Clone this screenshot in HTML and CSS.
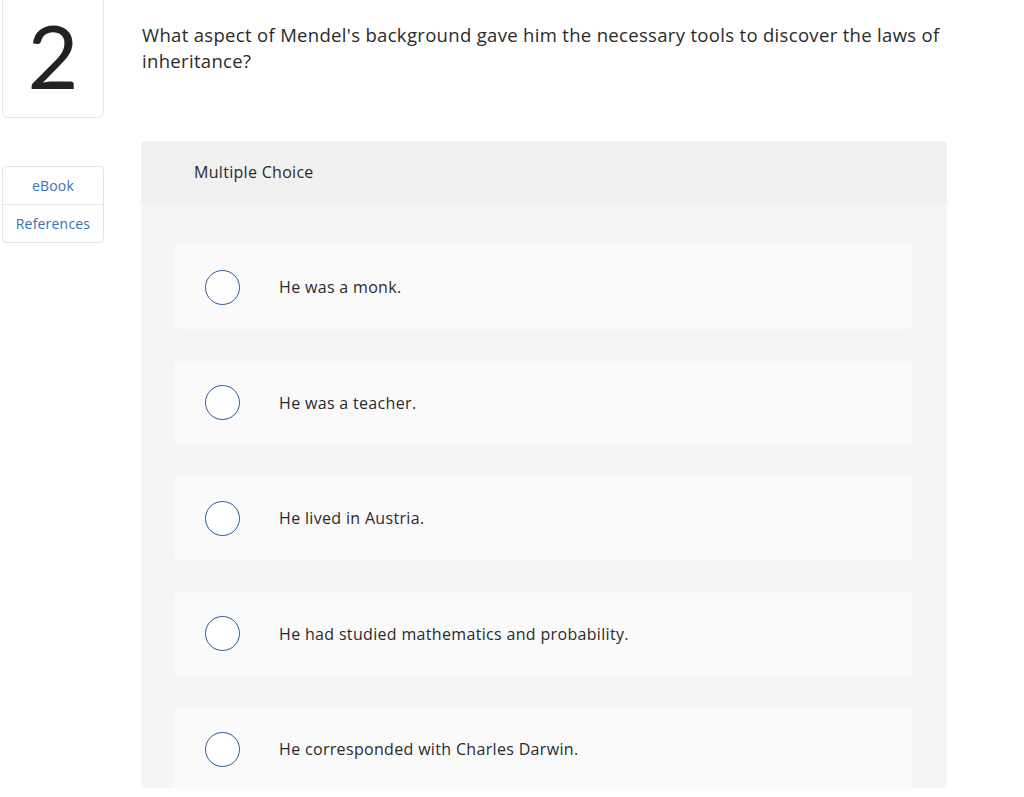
FILE: index.html
```html
<!DOCTYPE html>
<html lang="en">
<head>
<meta charset="utf-8">
<title>Question 2</title>
<link rel="stylesheet" href="styles.css">
</head>
<body>
<div class="page">
  <aside class="side">
    <div class="qnum">2</div>
    <nav class="tools">
      <a class="tool" href="#">eBook</a>
      <a class="tool" href="#">References</a>
    </nav>
  </aside>
  <main class="main">
    <p class="question">What aspect of Mendel's background gave him the necessary tools to discover the laws of inheritance?</p>
    <section class="panel">
      <div class="panel-head">Multiple Choice</div>
      <div class="panel-body">
        <label class="option"><span class="radio"></span><span class="opt-text">He was a monk.</span></label>
        <label class="option"><span class="radio"></span><span class="opt-text">He was a teacher.</span></label>
        <label class="option"><span class="radio"></span><span class="opt-text">He lived in Austria.</span></label>
        <label class="option"><span class="radio"></span><span class="opt-text">He had studied mathematics and probability.</span></label>
        <label class="option"><span class="radio"></span><span class="opt-text">He corresponded with Charles Darwin.</span></label>
      </div>
    </section>
  </main>
</div>
</body>
</html>
```
FILE: styles.css
```css
html, body {
  margin: 0;
  padding: 0;
  background: #ffffff;
}
body {
  font-family: "Open Sans", "Liberation Sans", sans-serif;
  color: #2a2a2a;
}
.page {
  display: flex;
  height: 788px;
  overflow: hidden;
}
.side {
  width: 102px;
  margin-left: 2px;
  flex: none;
  display: flex;
  flex-direction: column;
}
.qnum {
  margin-top: -6px;
  height: 124px;
  box-sizing: border-box;
  border: 1px solid #e6e6e6;
  border-radius: 6px;
  display: flex;
  align-items: center;
  justify-content: center;
  font-family: "Lato", "Liberation Sans", sans-serif;
  font-size: 88px;
  line-height: 1;
  color: #222222;
  padding-bottom: 2px;
}
.tools {
  margin-top: 48px;
  border: 1px solid #e3e3e3;
  border-radius: 4px;
  display: flex;
  flex-direction: column;
}
.tool {
  height: 37px;
  display: flex;
  align-items: center;
  justify-content: center;
  color: #3b6fb6;
  text-decoration: none;
  font-size: 14px;
  letter-spacing: 0.2px;
}
.tool + .tool {
  border-top: 1px solid #e3e3e3;
}
.main {
  margin-left: 37px;
  width: 806px;
  flex: none;
}
.question {
  margin: 22px 0 0 1px;
  font-size: 18.5px;
  letter-spacing: 0.32px;
  line-height: 26px;
  color: #2a2a2a;
  height: 119px;
}
.panel {
  background: #f5f5f5;
  border-radius: 4px 4px 0 0;
  height: 700px;
}
.panel-head {
  background: #f0f0f0;
  height: 63px;
  box-sizing: border-box;
  padding-left: 53px;
  display: flex;
  align-items: center;
  font-size: 16px;
  letter-spacing: 0.3px;
  border-radius: 4px 4px 0 0;
  padding-bottom: 1px;
}
.panel-body {
  padding: 41px 35px 0 33px;
  display: flex;
  flex-direction: column;
  gap: 31.5px;
}
.option {
  height: 84px;
  background: #fafafa;
  border-radius: 5px;
  display: flex;
  align-items: center;
  padding-left: 31px;
  flex: none;
}
.radio {
  width: 35px;
  height: 35px;
  box-sizing: border-box;
  border: 1.5px solid #2c5c98;
  border-radius: 50%;
  background: #ffffff;
  flex: none;
}
.opt-text {
  margin-left: 39px;
  font-size: 16px;
  letter-spacing: 0.33px;
  color: #2a2a2a;
}
```
